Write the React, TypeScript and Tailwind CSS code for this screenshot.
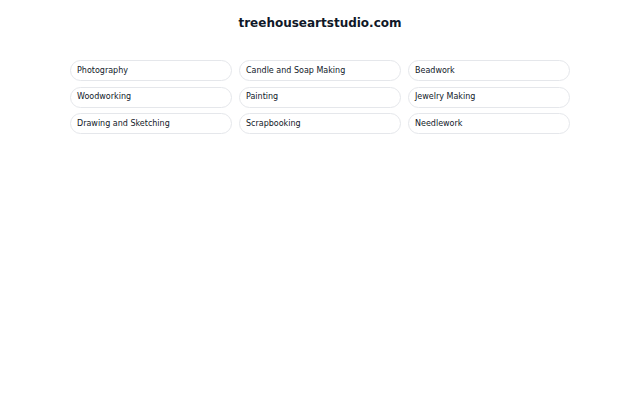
import React from 'react';

const hobbies = [
  'Photography',
  'Candle and Soap Making',
  'Beadwork',
  'Woodworking',
  'Painting',
  'Jewelry Making',
  'Drawing and Sketching',
  'Scrapbooking',
  'Needlework',
];

export default function App() {
  return (
    <div
      className="w-full min-h-[400px] bg-white pt-[15px]"
      style={{ fontFamily: '"DejaVu Sans", sans-serif' }}
    >
      <h1 className="text-center text-[12px] leading-[16px] font-bold text-gray-900">
        treehouseartstudio.com
      </h1>

      <div className="mx-auto mt-[29px] grid w-[500px] grid-cols-3 gap-x-[7px] gap-y-[5.5px]">
        {hobbies.map((name) => (
          <button
            key={name}
            className="flex h-[21px] items-center rounded-full border border-gray-200 bg-white pl-[6px] text-left text-[8px] text-gray-900"
          >
            {name}
          </button>
        ))}
      </div>
    </div>
  );
}
